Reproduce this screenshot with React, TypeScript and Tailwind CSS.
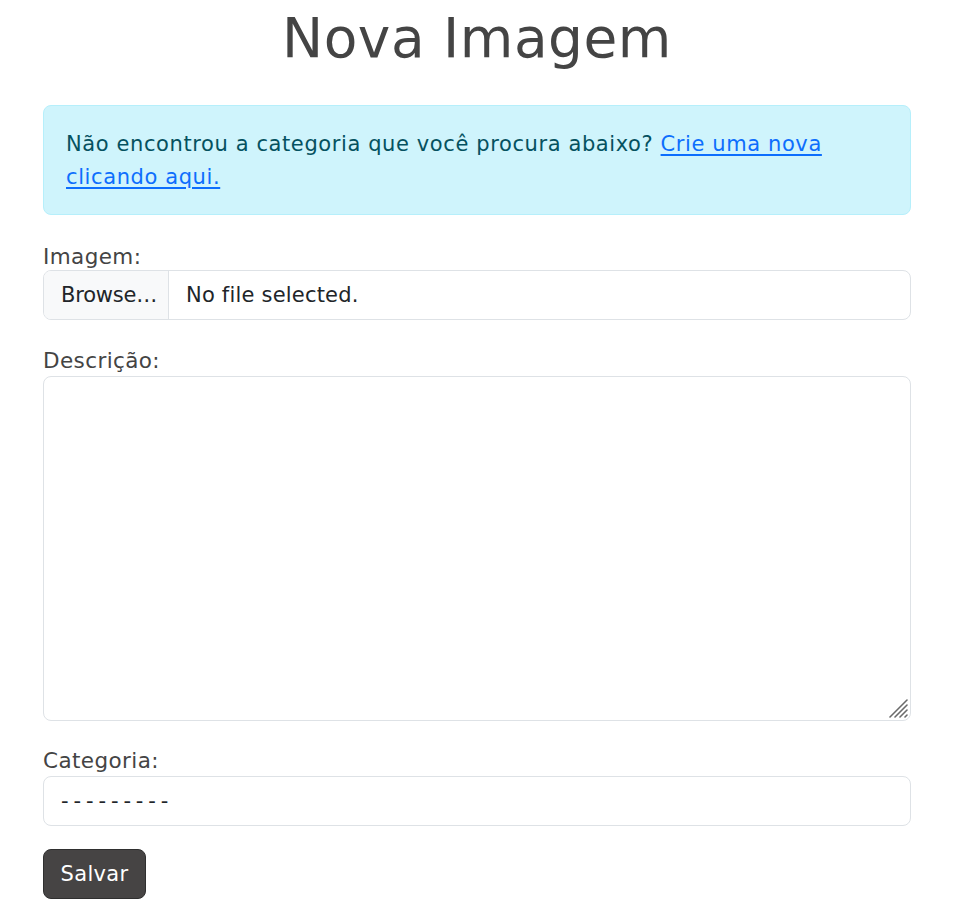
function ResizeGrip() {
  return (
    <svg className="absolute bottom-[2px] right-[2px]" width="20" height="20" viewBox="0 0 20 20">
      <g stroke="#6b6b6b" strokeWidth="1.6" strokeLinecap="round">
        <line x1="2" y1="19" x2="19" y2="2" />
        <line x1="7" y1="19" x2="19" y2="7" />
        <line x1="12" y1="19" x2="19" y2="12" />
        <line x1="17" y1="19" x2="19" y2="17" />
      </g>
    </svg>
  );
}

export default function App() {
  return (
    <div className="min-h-screen bg-white font-['DejaVu_Sans',sans-serif] text-[#444444]">
      <div className="ml-[43px] w-[868px] flex flex-col">
        {/* Title */}
        <h1 className="mt-[6px] h-[65px] text-center text-[55px] leading-[64px] tracking-[0.5px] text-[#444444]">
          Nova Imagem
        </h1>

        {/* Info alert */}
        <div className="mt-[34px] rounded-[8px] border border-[#b6effb] bg-[#cff4fc] px-[22px] pt-[22px] pb-[20px] text-[21px] leading-[33px] tracking-[0.6px] text-[#055160]">
          Não encontrou a categoria que você procura abaixo?{" "}
          <a href="#" className="text-[#0d6efd] underline underline-offset-[3px]">
            Crie uma nova
            <br />
            clicando aqui.
          </a>
        </div>

        {/* Imagem */}
        <label className="mt-[22px] pt-[3px] h-[33px] text-[21.5px] leading-[33px] tracking-[0.4px]">Imagem:</label>
        <div className="flex h-[50px] overflow-hidden rounded-[8px] border border-[#dee2e6] pt-[2px] text-[21px] tracking-[0.2px] text-[#212529]">
          <div className="-mt-[2px] flex w-[125px] items-center border-r border-[#dee2e6] bg-[#f8f9fa] pt-[2px] pl-[17px] tracking-[-0.2px]">
            Browse…
          </div>
          <div className="flex items-center pl-[17px]">No file selected.</div>
        </div>

        {/* Descrição */}
        <label className="mt-[23px] pt-[1px] h-[33px] text-[21.5px] leading-[33px] tracking-[0.4px]">Descrição:</label>
        <div className="relative h-[345px] rounded-[8px] border border-[#dee2e6]">
          <textarea className="h-full w-full resize-none rounded-[8px] bg-transparent outline-none" />
          <ResizeGrip />
        </div>

        {/* Categoria */}
        <label className="mt-[22px] pt-[1px] h-[33px] text-[21.5px] leading-[33px] tracking-[0.4px]">Categoria:</label>
        <div className="flex h-[50px] items-center rounded-[8px] border border-[#dee2e6] pt-[2px] pl-[17px] text-[21px] tracking-[4.9px] text-[#212529]">
          ---------
        </div>

        {/* Salvar */}
        <div className="mt-[23px]">
          <button className="h-[50px] w-[103px] rounded-[8px] border border-[#2f2f2f] bg-[#464444] pt-[2px] text-[21px] tracking-[0.3px] text-white">
            Salvar
          </button>
        </div>
      </div>
    </div>
  );
}
